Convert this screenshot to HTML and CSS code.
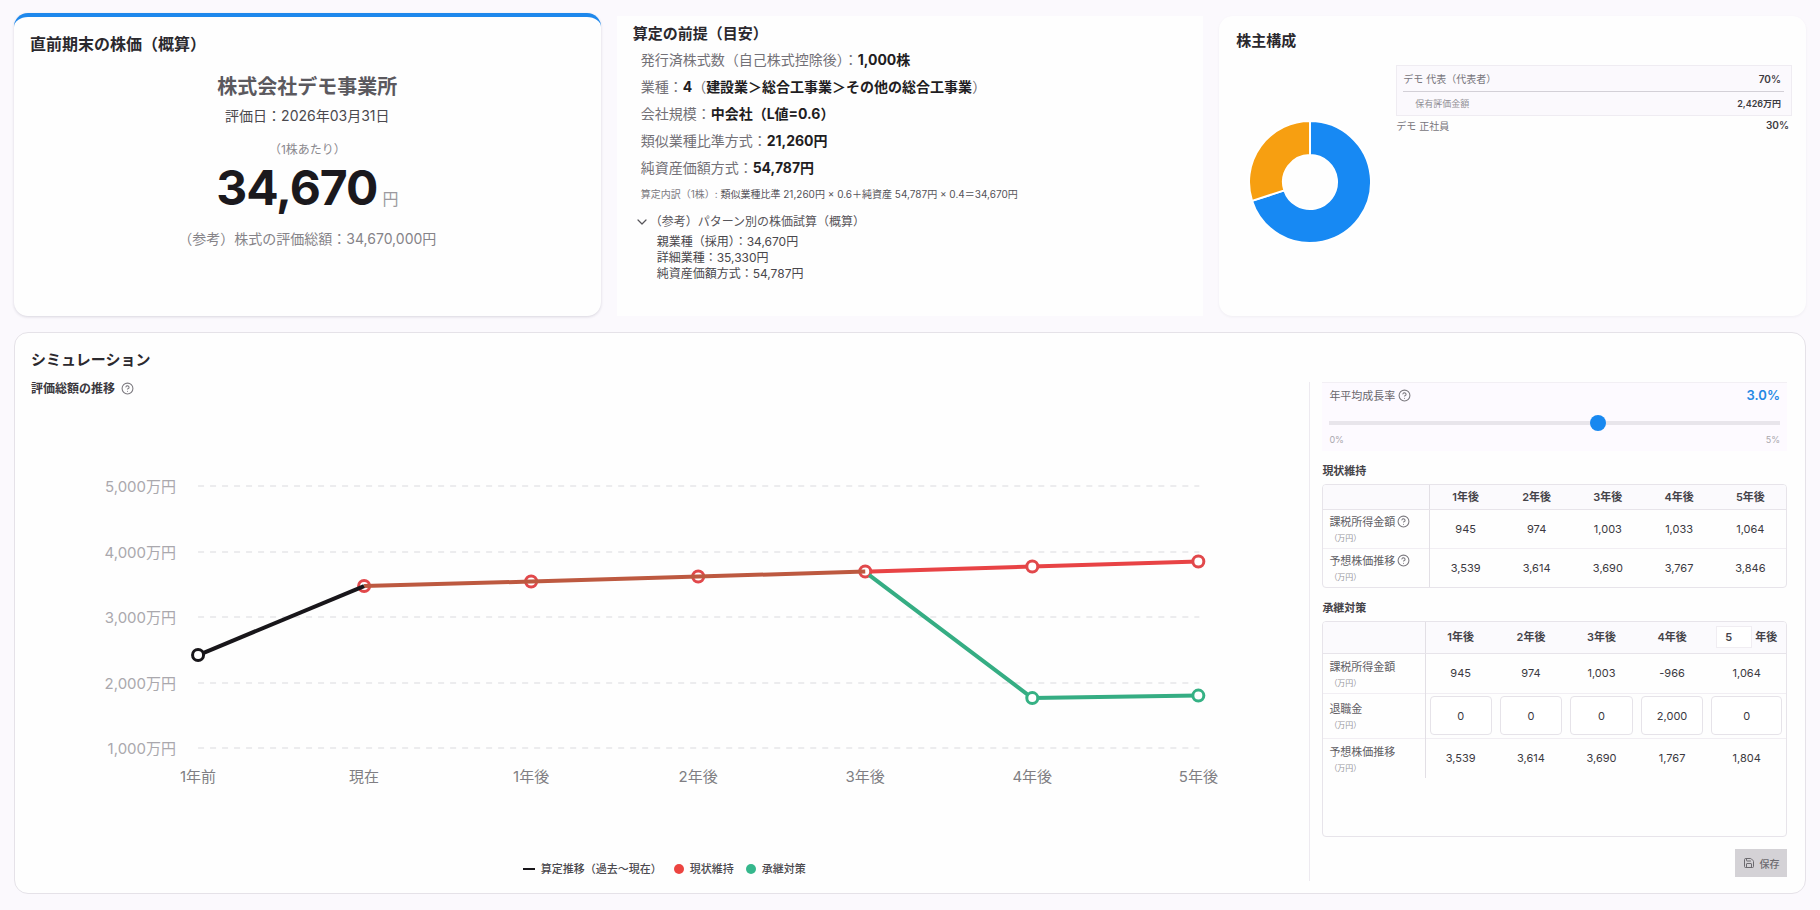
FILE: index.html
```html
<!DOCTYPE html>
<html lang="ja">
<head>
<meta charset="utf-8">
<meta name="viewport" content="width=device-width, initial-scale=1">
<title>株価シミュレーション</title>
<link rel="stylesheet" href="styles.css">
</head>
<body>
<svg class="sprite" aria-hidden="true">
  <symbol id="help" viewBox="0 0 24 24"><g fill="none" stroke="currentColor" stroke-width="2" stroke-linecap="round" stroke-linejoin="round"><circle cx="12" cy="12" r="10"/><path d="M9.1 9a3 3 0 0 1 5.8 1c0 2-3 3-3 3"/><path d="M12 17h.01"/></g></symbol>
</svg>
<main class="page">
  <section class="card price">
    <h2 class="card-title">直前期末の株価（概算）</h2>
    <div class="price-body">
      <p class="company">株式会社デモ事業所</p>
      <p class="date">評価日：2026年03月31日</p>
      <p class="per">（1株あたり）</p>
      <p class="amount"><strong>34,670</strong><span>円</span></p>
      <p class="total">（参考）株式の評価総額：34,670,000円</p>
    </div>
  </section>

  <section class="card basis">
    <h2 class="card-title">算定の前提（目安）</h2>
    <ul class="facts">
      <li>発行済株式数（自己株式控除後）：<strong>1,000株</strong></li>
      <li>業種：<strong>4</strong>（<strong>建設業＞総合工事業＞その他の総合工事業</strong>）</li>
      <li>会社規模：<strong>中会社（L値=0.6）</strong></li>
      <li>類似業種比準方式：<strong>21,260円</strong></li>
      <li>純資産価額方式：<strong>54,787円</strong></li>
    </ul>
    <p class="breakdown">算定内訳（1株）: <span>類似業種比準 21,260円 × 0.6＋純資産 54,787円 × 0.4＝34,670円</span></p>
    <details class="patterns" open>
      <summary><svg class="chevron" viewBox="0 0 12 12" aria-hidden="true"><path d="M2 4l4 4 4-4" fill="none" stroke="currentColor" stroke-width="1.2" stroke-linecap="round" stroke-linejoin="round"/></svg>（参考）パターン別の株価試算（概算）</summary>
      <ul>
        <li>親業種（採用）：34,670円</li>
        <li>詳細業種：35,330円</li>
        <li>純資産価額方式：54,787円</li>
      </ul>
    </details>
  </section>

  <section class="card holders">
    <h2 class="card-title">株主構成</h2>
    <div class="holders-body">
      <svg class="donut" viewBox="0 0 124 124" role="img" aria-label="株主構成 70% 30%">
        <g stroke="#fff" stroke-width="2" stroke-linejoin="round">
          <path fill="#1789f3" d="M62 1A61 61 0 1 1 3.99 80.85L36.32 70.34A27 27 0 1 0 62 35Z"/>
          <path fill="#f79f11" d="M3.99 80.85A61 61 0 0 1 62 1V35A27 27 0 0 0 36.32 70.34Z"/>
        </g>
      </svg>
      <div class="holder-list">
        <div class="holder-box">
          <div class="holder-row main-row"><span>デモ 代表（代表者）</span><strong>70%</strong></div>
          <div class="holder-row sub-row"><span>保有評価金額</span><strong>2,426万円</strong></div>
        </div>
        <div class="holder-row plain-row"><span>デモ 正社員</span><strong>30%</strong></div>
      </div>
    </div>
  </section>

  <section class="card sim">
    <h2 class="card-title">シミュレーション</h2>
    <div class="sim-grid">
      <div class="chart-col">
        <h3 class="chart-title">評価総額の推移 <svg class="help"><use href="#help"/></svg></h3>
        <svg class="chart" viewBox="0 0 1266 440" role="img" aria-label="評価総額の推移">
          <g class="grid"><path d="M167 87H1168M167 153H1168M167 218H1168M167 284H1168M167 349H1168"/></g>
          <g class="y-labels">
            <text x="145" y="93">5,000万円</text><text x="145" y="159">4,000万円</text><text x="145" y="224">3,000万円</text><text x="145" y="290">2,000万円</text><text x="145" y="355">1,000万円</text>
          </g>
          <g class="x-labels">
            <text x="167" y="383">1年前</text><text x="333" y="383">現在</text><text x="500" y="383">1年後</text><text x="667" y="383">2年後</text><text x="834" y="383">3年後</text><text x="1001" y="383">4年後</text><text x="1167" y="383">5年後</text>
          </g>
          <g class="dots past"><circle cx="167" cy="256" r="5.5"/></g>
          <g class="dots keep"><circle cx="333" cy="187" r="5.5"/><circle cx="500" cy="182.500" r="5.500"/><circle cx="667" cy="177.500" r="5.500"/><circle cx="834" cy="172.500" r="5.500"/></g>
          <path class="line mixed" d="M333 187L500 182.500 667 177.500 834 172.500"/>
          <path class="line keep" d="M840 172.500L1001 167.500 1167 162.500"/>
          <path class="line plan" d="M838 176L1001 299 1167 296.500"/>
          <path class="line past" d="M172 254L333 187"/>
          <g class="dots keep end"><circle cx="1001" cy="167.500" r="5.500"/><circle cx="1167" cy="162.500" r="5.500"/></g>
          <g class="dots plan end"><circle cx="1001" cy="299" r="5.500"/><circle cx="1167" cy="296.500" r="5.500"/></g>
        </svg>
        <ul class="legend">
          <li><i class="key dash"></i>算定推移（過去～現在）</li>
          <li><i class="key red"></i>現状維持</li>
          <li><i class="key green"></i>承継対策</li>
        </ul>
      </div>

      <div class="side">
        <div class="growth">
          <div class="growth-head"><label for="rate">年平均成長率 <svg class="help"><use href="#help"/></svg></label><output for="rate">3.0%</output></div>
          <input id="rate" type="range" min="0" max="5" step="0.1" value="3">
          <div class="scale"><span>0%</span><span>5%</span></div>
        </div>

        <h3 class="table-title">現状維持</h3>
        <div class="table-box">
          <table class="keep-table">
            <thead><tr><th class="head" aria-label="項目"></th><th>1年後</th><th>2年後</th><th>3年後</th><th>4年後</th><th>5年後</th></tr></thead>
            <tbody>
              <tr><th class="head">課税所得金額<svg class="help"><use href="#help"/></svg><small>（万円）</small></th><td>945</td><td>974</td><td>1,003</td><td>1,033</td><td>1,064</td></tr>
              <tr><th class="head">予想株価推移<svg class="help"><use href="#help"/></svg><small>（万円）</small></th><td>3,539</td><td>3,614</td><td>3,690</td><td>3,767</td><td>3,846</td></tr>
            </tbody>
          </table>
        </div>

        <h3 class="table-title">承継対策</h3>
        <div class="table-box tall">
          <table class="plan-table">
            <thead><tr><th class="head" aria-label="項目"></th><th>1年後</th><th>2年後</th><th>3年後</th><th>4年後</th><th class="last"><label class="year"><input type="text" value="5" inputmode="numeric">年後</label></th></tr></thead>
            <tbody>
              <tr><th class="head">課税所得金額<small>（万円）</small></th><td>945</td><td>974</td><td>1,003</td><td>-966</td><td>1,064</td></tr>
              <tr class="pay"><th class="head">退職金<small>（万円）</small></th><td><input type="text" value="0" aria-label="退職金 1年後"></td><td><input type="text" value="0" aria-label="退職金 2年後"></td><td><input type="text" value="0" aria-label="退職金 3年後"></td><td><input type="text" value="2,000" aria-label="退職金 4年後"></td><td><input type="text" value="0" aria-label="退職金 5年後"></td></tr>
              <tr><th class="head">予想株価推移<small>（万円）</small></th><td>3,539</td><td>3,614</td><td>3,690</td><td>1,767</td><td>1,804</td></tr>
            </tbody>
          </table>
        </div>
        <button class="save" type="button" disabled><svg viewBox="0 0 24 24" aria-hidden="true"><g fill="none" stroke="currentColor" stroke-width="2" stroke-linecap="round" stroke-linejoin="round"><path d="M15.2 3a2 2 0 0 1 1.4.6l3.8 3.8a2 2 0 0 1 .6 1.4V19a2 2 0 0 1-2 2H5a2 2 0 0 1-2-2V5a2 2 0 0 1 2-2z"/><path d="M17 21v-7a1 1 0 0 0-1-1H8a1 1 0 0 0-1 1v7M7 3v4a1 1 0 0 0 1 1h7"/></g></svg>保存</button>
      </div>
    </div>
  </section>
</main>
</body>
</html>
```

FILE: styles.css
```css
* { box-sizing: border-box; }
body {
  margin: 0;
  background: #fbf9fd;
  color: #27252b;
  font-family: Inter, "Noto Sans CJK JP", sans-serif;
  font-size: 14px;
}
h2, h3, p, ul { margin: 0; padding: 0; }
ul { list-style: none; }
.sprite { display: none; }

.page {
  min-height: 100vh;
  padding: 13px 14px 16px;
  display: grid;
  grid-template-columns: repeat(3, minmax(0, 1fr));
  grid-template-rows: minmax(303px, auto) 1fr;
  gap: 16px;
}
.card { background: #fefefe; border-radius: 14px; }
.card-title { font-size: 15px; line-height: 22px; font-weight: 600; color: #2b292e; }
.help { width: 13px; height: 13px; color: #7d7b81; vertical-align: -2px; }

/* share price */
.price {
  border-top: 4px solid #1e88ec;
  padding: 16px;
  box-shadow: 0 1px 3px rgba(40, 30, 60, .16);
}
.price .card-title { font-size: 16px; }
.price-body { margin-top: 17px; text-align: center; }
.company { font-size: 20px; line-height: 30px; font-weight: 600; color: #5b595e; }
.date { margin-top: 4px; font-size: 14px; line-height: 20px; color: #4b494e; }
.per { margin-top: 15px; font-size: 12px; line-height: 18px; color: #8b898e; }
.amount { height: 48px; margin-top: 5px; line-height: 48px; color: #9c9a9f; font-size: 16px; }
.amount strong { font-size: 48px; font-weight: 700; color: #1b191d; letter-spacing: -1px; margin-right: 5px; }
.total { margin-top: 17px; font-size: 14px; line-height: 20px; color: #858388; }

/* calculation basis */
.basis { margin-top: 3px; padding: 7px 16px; border-radius: 0; }
.facts { margin-top: 1px; padding-left: 8px; }
.facts li { font-size: 14px; line-height: 27px; color: #737177; }
.facts strong { font-weight: 700; color: #1f1d22; }
.breakdown { margin-top: 4px; padding-left: 8px; font-size: 10px; line-height: 18px; color: #7b797f; }
.breakdown span { color: #545258; }
.patterns { margin-top: 9px; padding-left: 3px; font-size: 12px; line-height: 16px; color: #49474c; }
.patterns summary { display: flex; align-items: center; gap: 2px; line-height: 20px; cursor: pointer; color: #57555a; }
.patterns ul { padding: 2px 0 0 21px; }
.chevron { width: 12px; height: 12px; }

/* shareholders */
.holders { margin-top: 3px; padding: 14px 14px 12px 17px; box-shadow: 0 1px 3px rgba(40, 30, 60, .05); }
.holders-body { display: flex; align-items: flex-start; margin-top: 13px; gap: 24px; }
.donut { flex: none; width: 124px; height: 124px; margin: 55px 0 0 12px; }
.holder-list { flex: 1; min-width: 0; }
.holder-box { background: #fbf9fd; border: 1px solid #efecf2; padding: 0 7px 0 6px; }
.holder-row { display: flex; justify-content: space-between; align-items: center; font-size: 10px; color: #77757b; }
.holder-row strong { font-weight: 600; color: #3d3b41; }
.main-row { height: 26px; border-bottom: 1px solid #d3d0d7; padding-right: 3px; }
.sub-row { height: 23px; padding: 0 3px 0 12px; font-size: 9px; }
.sub-row span { color: #929096; }
.plain-row { height: 18px; padding-right: 3px; }

/* simulation */
.sim {
  grid-column: 1 / -1;
  border: 1px solid #e5e2e8;
  padding: 16px 18px 12px 16px;
  display: flex;
  flex-direction: column;
}
.sim-grid { flex: 1; display: grid; grid-template-columns: minmax(0, 1fr) 27.2%; margin-top: 11px; }
.chart-col { display: flex; flex-direction: column; padding-right: 12px; }
.chart-title { font-size: 12px; line-height: 14px; font-weight: 600; color: #3b393e; }
.chart-title .help { margin-left: 3px; }
.chart { width: 100%; height: auto; margin-top: 3px; }
.grid path { stroke: #ececee; stroke-width: 2; stroke-dasharray: 6 6; fill: none; }
.chart text { font-size: 15px; }
.y-labels { text-anchor: end; fill: #aaa8ad; }
.x-labels { text-anchor: middle; fill: #807e83; }
.line { fill: none; stroke-width: 4; stroke-linejoin: round; }
.line.past { stroke: #18161a; }
.line.keep { stroke: #e84345; }
.line.plan { stroke: #35ad83; }
.line.mixed { stroke: #bd5940; }
.dots circle { fill: #fff; stroke-width: 3; }
.dots.past circle { stroke: #18161a; }
.dots.keep circle { stroke: #e1484b; }
.dots.plan circle { stroke: #35b184; }
.legend { display: flex; justify-content: center; gap: 12px; margin-top: auto; padding-bottom: 4px; font-size: 11px; line-height: 16px; font-weight: 500; color: #4b494e; }
.legend li { display: flex; align-items: center; gap: 6px; }
.key { width: 10px; height: 10px; border-radius: 50%; }
.key.dash { width: 12px; height: 2px; border-radius: 0; background: #18161a; }
.key.red { background: #ec4440; }
.key.green { background: #35b78c; }

.side { border-left: 1px solid #edeaf0; padding-left: 12px; display: flex; flex-direction: column; }
.growth { background: #fdfaff; border-top: 1px solid #f2eff4; padding: 2px 7px 5px; }
.growth-head { display: flex; justify-content: space-between; align-items: center; height: 20px; font-size: 11px; color: #69676d; }
.growth-head output { font-size: 13px; font-weight: 600; color: #2488e4; }
.growth input { appearance: none; display: block; width: 100%; height: 16px; margin: 10px 0 3px; background: none; }
.growth input::-webkit-slider-runnable-track { height: 4px; background: #e8e5eb; }
.growth input::-webkit-slider-thumb { appearance: none; width: 16px; height: 16px; margin-top: -6px; border-radius: 50%; background: #1888f0; }
.scale { display: flex; justify-content: space-between; font-size: 9px; line-height: 12px; color: #aaa8ae; }
.table-title { margin-top: 11px; font-size: 11px; line-height: 18px; font-weight: 600; color: #454348; }
.table-box { margin-top: 4px; border: 1px solid #e7e4ea; border-radius: 4px; overflow: hidden; }
.table-box.tall { flex: 1; }
table { width: 100%; table-layout: fixed; border-collapse: collapse; font-size: 11px; line-height: 16px; text-align: center; }
th, td { padding: 0; }
td { color: #3b393f; }
thead th { height: 24px; background: #fbfafd; font-weight: 600; color: #454349; border-bottom: 1px solid #e7e4ea; }
.head { width: 23%; border-right: 1px solid #e2dfe5; }
.plan-table .head { width: 22%; }
.plan-table .last { width: 17%; }
tbody .head { text-align: left; font-weight: 400; color: #5f5d63; padding: 3px 0 0 6px; }
tbody .help { margin-left: 2px; }
tbody tr { height: 39px; border-bottom: 1px solid #f1eef3; }
tbody tr:last-child { border-bottom: 0; }
small { display: block; font-size: 8px; line-height: 16px; color: #98969c; }
.plan-table thead th { height: 31px; }
.plan-table tbody tr { height: 40px; }
.plan-table tbody tr.pay { height: 45px; }
.pay input { width: calc(100% - 8px); height: 39px; padding: 0; border: 1px solid #e6e3e9; border-radius: 4px; background: #fff; font: inherit; text-align: center; color: inherit; display: block; margin: 0 auto; }
.year { display: flex; align-items: center; justify-content: center; gap: 3px; }
.year input { width: 36px; height: 22px; padding: 0 0 0 8px; border: 1px solid #f0edf2; background: #fff; font: inherit; color: inherit; }
.save { align-self: flex-end; display: flex; align-items: center; justify-content: center; gap: 5px; width: 52px; height: 28px; margin: 12px 0 4px; padding: 0; border: 0; background: #d4d2d6; color: #6c6a6f; font: 500 10px Inter, "Noto Sans CJK JP", sans-serif; }
.save svg { width: 12px; height: 12px; }
```
